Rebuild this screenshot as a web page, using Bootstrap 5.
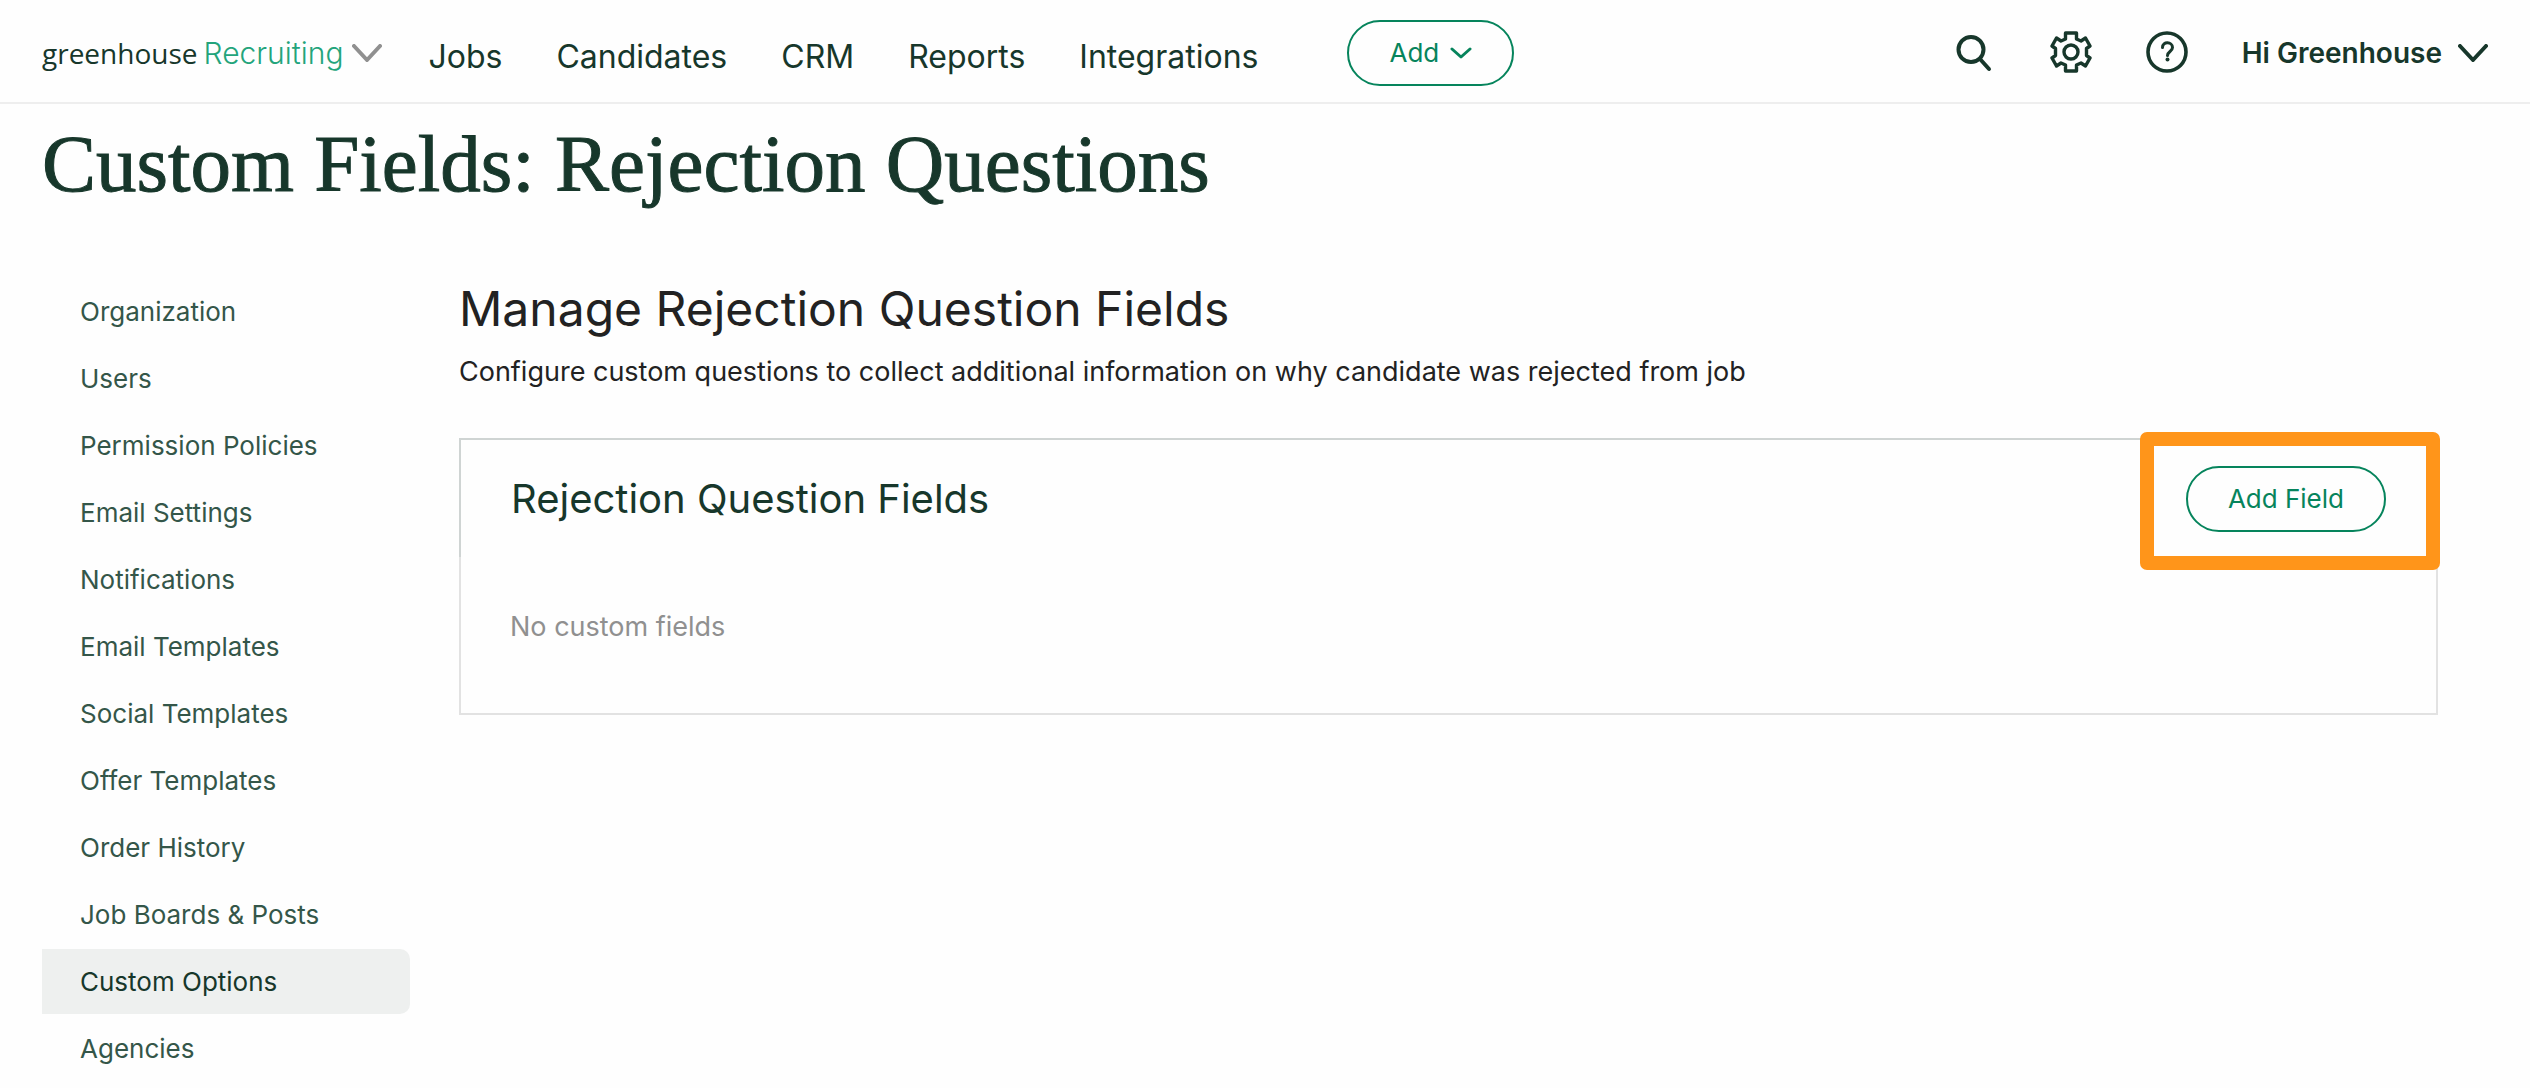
<!DOCTYPE html>
<html lang="en">
<head>
<meta charset="utf-8">
<meta name="viewport" content="width=device-width, initial-scale=1">
<title>Custom Fields: Rejection Questions</title>
<link href="https://cdn.jsdelivr.net/npm/bootstrap@5.3.0/dist/css/bootstrap.min.css" rel="stylesheet">
<style>
  :root { --gh-ink: #17372b; --gh-green: #06845c; }
  body { font-family: Inter, "Liberation Sans", sans-serif; color: #222; background: #fefefe; font-size: 27px; line-height: 36px; }
  a { text-decoration: none; }
  svg { display: block; flex: none; fill: none; stroke: currentColor; stroke-linecap: round; stroke-linejoin: round; }
  .topbar { height: 104px; padding: 4px 42px 0; border-bottom: 2px solid #eee; color: var(--gh-ink); }
  .brand { gap: 6px; color: var(--gh-ink); }
  .brand-word { font-family: "Open Sans", sans-serif; font-size: 28px; }
  .brand-product { color: #23a47b; font-size: 30px; font-weight: 300; }
  .brand svg { color: #909090; margin-left: 3px; }
  .mainnav { gap: 54px; margin-left: 46px; padding-top: 8px; font-size: 32px; }
  .mainnav a, .tool, .user { color: var(--gh-ink); }
  .btn-pill { height: 66px; padding: 0 40px; border: 2px solid var(--gh-green); border-radius: 33px; color: var(--gh-green); font-size: 26px; line-height: 32px; background: #fefefe; }
  .btn-pill:hover { background: var(--gh-green); color: #fff; }
  .btn-add { margin-left: 89px; gap: 11px; }
  .tool { padding: 0; border: 0; background: none; }
  .tools { gap: 54px; }
  .user { gap: 16px; font-size: 28px; font-weight: 600; }
  .page-title { font-family: "Liberation Serif", serif; font-size: 81px; line-height: 96px; font-weight: 400; -webkit-text-stroke: 1px currentColor; color: var(--gh-ink); margin: 12px 42px 67px; }
  .layout { padding: 0 92px 0 42px; gap: 49px; }
  .sidenav { width: 368px; gap: 2px; font-size: 26px; line-height: 33px; }
  .sidenav a { padding: 16px 38px; color: #345649; border-radius: 0 10px 10px 0; }
  .sidenav a.active { background: #eef0ef; color: var(--gh-ink); }
  .section-title { font-size: 48px; line-height: 56px; font-weight: 400; margin: 2px 0 17px; }
  .intro { margin-bottom: 48px; }
  .panel-head { height: 119px; padding: 26px 50px 25px; border: 2px solid #cfd4d3; border-bottom: 0; }
  .panel-head h3 { font-size: 40px; line-height: 48px; font-weight: 400; color: var(--gh-ink); }
  .panel-main { padding: 50px 49px 66px; border: 2px solid #e2e2e2; border-top: 0; color: #909090; line-height: 40px; }
  .highlight { position: absolute; inset: -34px -54px -38px -46px; border: 14px solid #ff951a; border-radius: 7px; pointer-events: none; }
</style>
</head>
<body>
<header class="topbar d-flex align-items-center">
  <a class="brand d-flex align-items-center" href="#">
    <span class="brand-word">greenhouse</span><span class="brand-product">Recruiting</span>
    <svg width="30" height="18" viewBox="0 0 30 18" stroke-width="4" aria-hidden="true"><path d="M2 2l13 14L28 2"/></svg>
  </a>
  <nav class="mainnav d-flex" aria-label="Main">
    <a href="#">Jobs</a><a href="#">Candidates</a><a href="#">CRM</a><a href="#">Reports</a><a href="#">Integrations</a>
  </nav>
  <button class="btn btn-pill btn-add d-flex align-items-center" type="button">Add
    <svg width="22" height="12" viewBox="0 0 22 12" stroke-width="3" aria-hidden="true"><path d="M2 2l9 8 9-8"/></svg>
  </button>
  <div class="tools d-flex align-items-center ms-auto">
    <button class="tool" type="button" aria-label="Search"><svg width="42" height="44" viewBox="0 0 42 44" stroke-width="4"><circle cx="17" cy="18.500" r="12.500"/><path d="M26 28l9 10"/></svg></button>
    <button class="tool" type="button" aria-label="Settings"><svg width="42" height="44" viewBox="0 0 42 44" stroke-width="3.400"><path d="M15.500 2h11v6l4.500 2 4.500-3 4.500 8-3.500 2.500v7L40 27l-4.500 8-4.500-3-4.500 2v6h-11v-6L11 32l-4.500 3L2 27l3.500-2.500v-7L2 15l4.500-8 4.500 3 4.500-2z"/><circle cx="21" cy="21" r="7"/></svg></button>
    <button class="tool" type="button" aria-label="Help"><svg width="42" height="44" viewBox="0 0 42 44" stroke-width="3.600"><circle cx="21" cy="21" r="19"/><path stroke-width="3" d="M16.500 16.500c0-6.500 10-6 10 0 0 4-5 4-5 8"/><circle cx="21.500" cy="28.500" r="2" fill="currentColor" stroke="none"/></svg></button>
    <a class="user d-flex align-items-center" href="#">Hi Greenhouse
      <svg width="30" height="18" viewBox="0 0 30 18" stroke-width="4" aria-hidden="true"><path d="M2 2l13 14L28 2"/></svg>
    </a>
  </div>
</header>
<h1 class="page-title">Custom Fields: Rejection Questions</h1>
<div class="layout d-flex align-items-start">
  <nav class="sidenav d-flex flex-column flex-shrink-0" aria-label="Settings">
    <a href="#">Organization</a>
    <a href="#">Users</a>
    <a href="#">Permission Policies</a>
    <a href="#">Email Settings</a>
    <a href="#">Notifications</a>
    <a href="#">Email Templates</a>
    <a href="#">Social Templates</a>
    <a href="#">Offer Templates</a>
    <a href="#">Order History</a>
    <a href="#">Job Boards &amp; Posts</a>
    <a href="#" class="active" aria-current="page">Custom Options</a>
    <a href="#">Agencies</a>
  </nav>
  <main class="flex-grow-1">
    <h2 class="section-title">Manage Rejection Question Fields</h2>
    <p class="intro">Configure custom questions to collect additional information on why candidate was rejected from job</p>
    <section>
      <div class="panel-head d-flex align-items-center justify-content-between">
        <h3 class="mb-0">Rejection Question Fields</h3>
        <div class="position-relative">
          <button class="btn btn-pill d-block" type="button">Add Field</button>
          <div class="highlight"></div>
        </div>
      </div>
      <div class="panel-main">No custom fields</div>
    </section>
  </main>
</div>
<script src="https://cdn.jsdelivr.net/npm/bootstrap@5.3.0/dist/js/bootstrap.bundle.min.js"></script>
</body>
</html>
